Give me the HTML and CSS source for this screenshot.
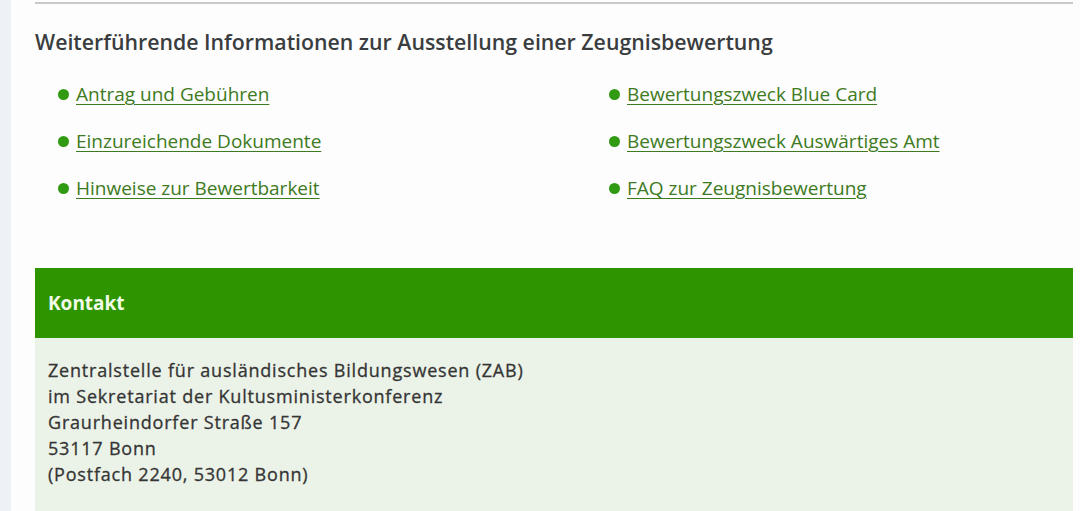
FILE: index.html
```html
<!DOCTYPE html>
<html lang="de">
<head>
    <meta charset="UTF-8">
    <meta name="viewport" content="width=device-width, initial-scale=1.0">
    <title>Zeugnisbewertung</title>
    <link rel="stylesheet" href="styles.css">
</head>
<body>
    <div class="page">
        <div class="content">
            <hr class="rule">
            <h2>Weiterführende Informationen zur Ausstellung einer Zeugnisbewertung</h2>
            <ul class="links">
                <li><a href="#">Antrag und Gebühren</a></li>
                <li><a href="#">Bewertungszweck Blue Card</a></li>
                <li><a href="#">Einzureichende Dokumente</a></li>
                <li><a href="#">Bewertungszweck Auswärtiges Amt</a></li>
                <li><a href="#">Hinweise zur Bewertbarkeit</a></li>
                <li><a href="#">FAQ zur Zeugnisbewertung</a></li>
            </ul>
            <div class="contact">
                <div class="contact-head">Kontakt</div>
                <div class="contact-body">
                    Zentralstelle für ausländisches Bildungswesen (ZAB)<br>
                    im Sekretariat der Kultusministerkonferenz<br>
                    Graurheindorfer Straße 157<br>
                    53117 Bonn<br>
                    (Postfach 2240, 53012 Bonn)
                </div>
            </div>
        </div>
    </div>
</body>
</html>
```

FILE: styles.css
```css
html, body {
    margin: 0;
    height: 100%;
}
body {
    font-family: "Open Sans", Arial, sans-serif;
    background-color: #eef1f6;
    color: #333;
    overflow: hidden;
}
.page {
    margin-left: 11px;
    background: #fdfdfd;
    min-height: 100%;
}
.content {
    padding: 2px 7px 0 24px;
}
.rule {
    margin: 0;
    border: none;
    border-top: 2px solid #c9c9c9;
}
h2 {
    margin: 24px 0 0;
    font-size: 21.3px;
    font-weight: 600;
    line-height: 28px;
    color: #3a3d40;
}
.links {
    list-style: none;
    margin: 25px 0 0;
    padding: 0 0 0 23px;
    display: grid;
    grid-template-columns: 551px 1fr;
    row-gap: 21px;
}
.links li {
    display: flex;
    align-items: center;
    gap: 7px;
    font-size: 19px;
    line-height: 26px;
}
.links li::before {
    content: "";
    width: 11px;
    height: 11px;
    border-radius: 50%;
    background: #2f9a12;
    flex: none;
}
.links a {
    color: #3d7a22;
    text-decoration: underline;
    text-underline-offset: 3px;
    text-decoration-thickness: 1px;
}
.contact {
    margin-top: 67px;
}
.contact-head {
    background: #2e9500;
    color: #f2fbe9;
    font-size: 19px;
    font-weight: 700;
    height: 70px;
    line-height: 70px;
    padding: 0 13px;
    box-sizing: border-box;
}
.contact-body {
    background: #ebf2e7;
    padding: 19px 13px 26px;
    font-size: 18px;
    letter-spacing: 0.8px;
    -webkit-text-stroke: 0.3px #353535;
    line-height: 26px;
    color: #353535;
}
```
